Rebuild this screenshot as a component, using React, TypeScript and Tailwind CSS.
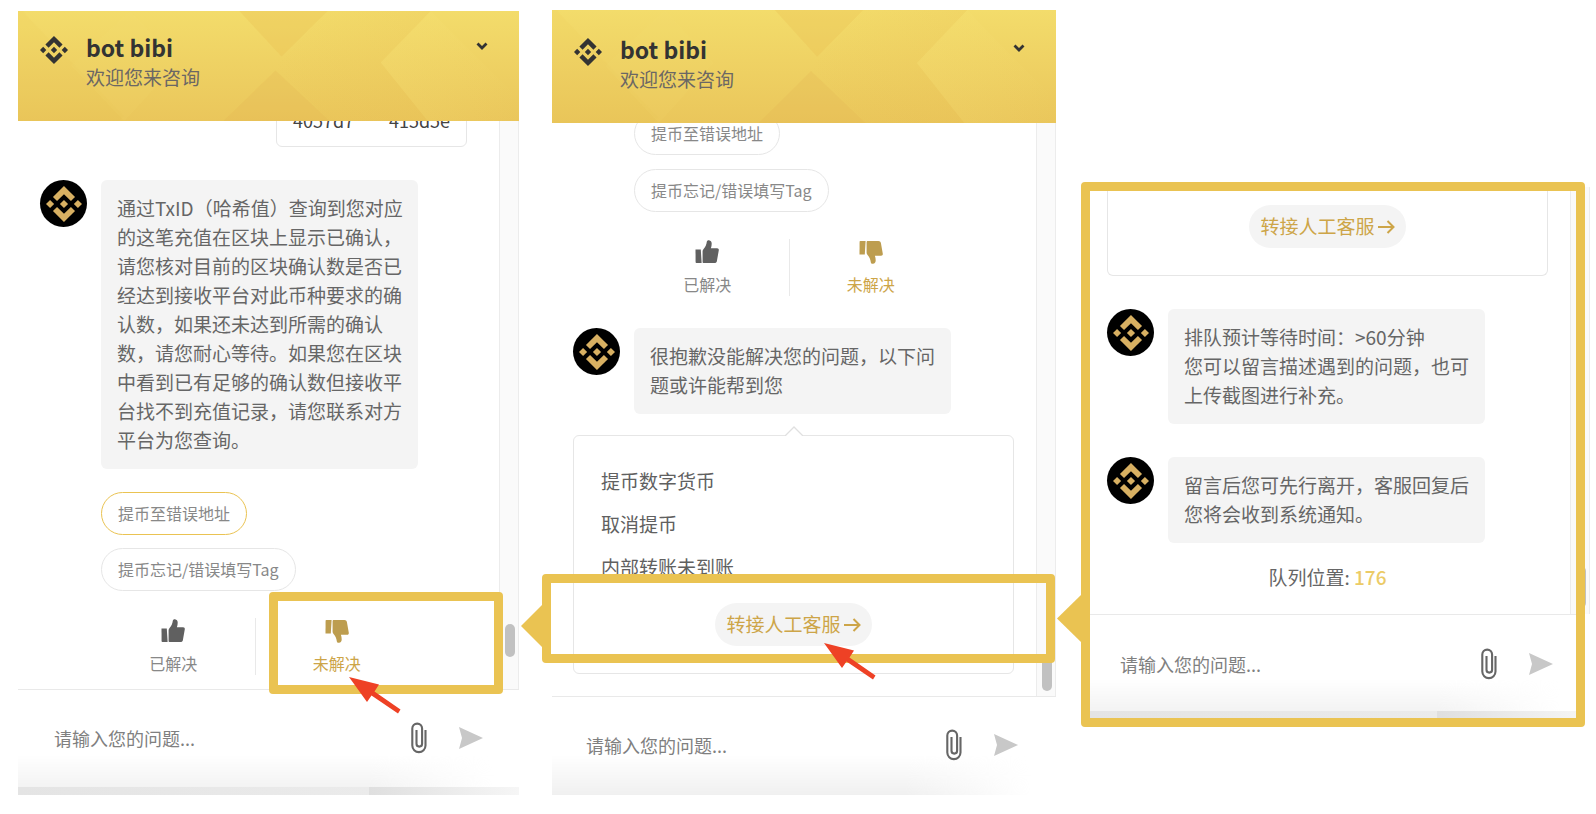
import { SiBinance } from "react-icons/si";

const HeaderPattern = () => (
  <svg
    className="absolute inset-0 h-full w-full"
    viewBox="0 0 500 111"
    preserveAspectRatio="none"
    aria-hidden="true"
  >
    <defs>
      <linearGradient id="headerBase" x1="0" y1="0" x2="0" y2="1">
        <stop offset="0" stopColor="#f3dc6b" />
        <stop offset="1" stopColor="#eac65b" />
      </linearGradient>
      <linearGradient id="headerShade" x1="0" y1="0" x2="1" y2="0">
        <stop offset="0" stopColor="#e6b94f" stopOpacity="0" />
        <stop offset="1" stopColor="#e6b94f" stopOpacity="0.18" />
      </linearGradient>
      <linearGradient id="headerGlow" x1="0" y1="0" x2="1" y2="0">
        <stop offset="0" stopColor="#f8e47a" stopOpacity="0.2" />
        <stop offset="1" stopColor="#f8e47a" stopOpacity="0" />
      </linearGradient>
    </defs>
    <rect width="500" height="111" fill="url(#headerBase)" />
    <path d="M10 6 106 106 101 111H0V0H5z" fill="#e6b94f" fillOpacity="0.08" />
    <path d="M112 0 160 52 106 111 53 55z" fill="#f8e47a" fillOpacity="0.1" />
    <path d="M221 0H309L263 46z" fill="#e6b94f" fillOpacity="0.26" />
    <path d="M309 0H412L362 52 409 111H311L257 56z" fill="url(#headerShade)" />
    <path d="M257 60 311 111H205z" fill="#e0b050" fillOpacity="0.2" />
    <path d="M362 52 412 0 433 22 500 89V111H409z" fill="url(#headerGlow)" />
  </svg>
);

const ThumbIcon = ({ className }: { className: string }) => (
  <svg className={className} viewBox="0 0 24 24" fill="currentColor" aria-hidden="true">
    <path d="M.5 9.500h5.300l.8 13.600H1.400A.9.9 0 0 1 .6 22.300z" />
    <path d="M7.600 22V11.200c0-.8.3-1.300.8-1.900 2-2.200 3.100-4.700 3.400-7.500C12 .6 12.900 0 14 .2c1.700.3 2.700 1.600 2.700 3.300 0 1.600-.3 3.200-.8 4.700h6.200c1.200 0 1.900.9 1.700 2.100l-1.900 10.600c-.2 1.300-1.100 2.200-2.500 2.200H8.900C8 23.100 7.600 22.700 7.600 22z" />
  </svg>
);

const Header = ({ className }: { className: string }) => (
  <header className={`relative flex items-start overflow-hidden pl-[22px] pr-[31px] ${className}`}>
    <HeaderPattern />
    <SiBinance className="relative mt-1 size-7 text-[#333333]" />
    <div className="relative ml-[18px] flex-1">
      <h1 className="text-[23px] leading-[31px] font-bold text-[#333333]">bot bibi</h1>
      <p className="text-[19px] leading-7 text-[#6b6764]">欢迎您来咨询</p>
    </div>
    <button type="button" aria-label="收起" className="relative mt-[10px] text-[#333333]">
      <svg className="h-2 w-3" viewBox="0 0 12 8" fill="none" aria-hidden="true">
        <path d="m1.500 1.500 4.500 4.500 4.500-4.500" stroke="currentColor" strokeWidth="2.800" />
      </svg>
    </button>
  </header>
);

const BotMessage = ({ children }: { children: React.ReactNode }) => (
  <div className="flex items-start gap-[14px]">
    <div className="flex size-[47px] shrink-0 items-center justify-center rounded-full bg-black">
      <SiBinance className="size-9 text-[#d8b062]" />
    </div>
    <p className="w-[317px] rounded-md bg-[#f4f4f4] pt-[13px] pr-3 pb-[15px] pl-4 text-[19px] leading-[29px] text-[#666666]">
      {children}
    </p>
  </div>
);

const Chip = ({ label, active = false }: { label: string; active?: boolean }) => (
  <button
    type="button"
    className={`h-[43px] rounded-full border bg-white px-4 pb-[2px] text-base text-[#888888] ${
      active ? "border-[#eac352]" : "border-[#e6e6e6]"
    }`}
  >
    {label}
  </button>
);

const Feedback = () => (
  <div className="flex w-[326px]">
    <button
      type="button"
      className="flex flex-1 flex-col items-center gap-2 border-r border-[#e9e9e9] pt-px text-base leading-6 text-[#888888]"
    >
      <ThumbIcon className="size-6 text-[#606060]" />
      已解决
    </button>
    <button
      type="button"
      className="flex flex-1 flex-col items-center gap-2 pt-px text-base leading-6 text-[#cda548]"
    >
      <ThumbIcon className="size-6 -scale-y-100 text-[#bd9d4f]" />
      未解决
    </button>
  </div>
);

const TransferButton = () => (
  <button
    type="button"
    className="mx-auto flex h-[43px] items-center gap-[2px] rounded-full bg-[#f4f4f4] px-[11px] text-[19px] text-[#cda548]"
  >
    转接人工客服
    <svg className="h-4 w-[18px]" viewBox="0 0 18 16" fill="none" aria-hidden="true">
      <path d="M1 8h15M10.500 2l6 6-6 6" stroke="currentColor" strokeWidth="2" />
    </svg>
  </button>
);

const Scrollbar = ({ thumb }: { thumb: string }) => (
  <div className="relative w-5 shrink-0 border-x border-[#ececec] bg-[#fafafa]">
    <div className={`absolute left-[5px] w-[10px] rounded-full bg-[#c1c1c1] ${thumb}`} />
  </div>
);

const Composer = ({ className }: { className: string }) => (
  <form className={`relative flex items-start border-t border-[#e9e9e9] bg-white ${className}`}>
    <div className="absolute inset-x-0 bottom-0 h-10 bg-linear-to-b from-transparent to-[#f0f0f0] mask-r-from-70% mask-r-to-95%" />
    <input
      type="text"
      aria-label="请输入您的问题"
      placeholder="请输入您的问题..."
      className="relative h-8 min-w-0 flex-1 text-lg text-[#666666] outline-none placeholder:text-[#808080]"
    />
    <button type="button" aria-label="上传附件" className="relative text-[#666666]">
      <svg className="h-8 w-4" viewBox="0 0 16 32" fill="none" aria-hidden="true">
        <path
          d="M14.500 8v15.500a6.600 6.600 0 0 1-13.200 0V6.500a4.900 4.900 0 0 1 9.800 0v15.300a2.800 2.800 0 0 1-5.600 0V8"
          stroke="currentColor"
          strokeWidth="2.100"
        />
      </svg>
    </button>
    <button type="button" aria-label="发送" className="relative ml-8 mt-[5px] text-[#c8c8c8]">
      <svg className="h-[22px] w-6" viewBox="0 0 24 22" fill="currentColor" aria-hidden="true">
        <path d="M0 0 24 11 0 22 3 11z" />
      </svg>
    </button>
  </form>
);

// grey strip left over from the page's horizontal scrollbar
const BottomStrip = () => (
  <div className="absolute inset-x-0 bottom-0 flex h-2">
    <div className="flex-[7] bg-linear-to-r from-[#e4e4e4] to-[#ebebeb]" />
    <div className="flex-[3] bg-linear-to-r from-[#dfdfdf] to-[#f6f6f6]" />
  </div>
);

const Pointer = ({ className }: { className: string }) => (
  <svg className={`absolute ${className}`} viewBox="0 0 26 50" preserveAspectRatio="none" aria-hidden="true">
    <path d="M0 25 26 0v50z" fill="#eac352" />
  </svg>
);

const RedArrow = ({ className }: { className: string }) => (
  <svg className={`absolute z-20 h-[37px] w-[52px] ${className}`} viewBox="0 0 52 37" aria-hidden="true">
    <path d="M0 0 30 7.500 25.500 14.500 51.500 32.500 49 36.500 22.500 18.500 18 25z" fill="#ee4125" />
  </svg>
);

const frame = "pointer-events-none absolute z-10 rounded border-[9px] border-[#eac352]";

export default function App() {
  return (
    <main
      lang="zh-CN"
      className="flex min-h-screen items-start bg-white pl-[18px] pr-[6px] font-['Noto_Sans_CJK_SC',sans-serif]"
    >
      <section className="relative mt-[11px] min-w-0 flex-[501]">
        <Header className="h-[110px] pt-[21px]" />
        <div className="relative">
          <div className="flex">
            <div className="flex min-w-0 flex-1 flex-col overflow-hidden pb-[14px] pl-[22px]">
              <div className="-mt-6 mr-8 flex h-[50px] w-[191px] items-center justify-between self-end rounded-md border border-[#e6e6e6] px-4 pb-1 text-lg text-[#444444]">
                <span>4057d7</span>
                <span>415d5e</span>
              </div>
              <div className="mt-[33px]">
                <BotMessage>
                  通过TxID（哈希值）查询到您对应的这笔充值在区块上显示已确认，请您核对目前的区块确认数是否已经达到接收平台对此币种要求的确认数，如果还未达到所需的确认数，请您耐心等待。如果您在区块中看到已有足够的确认数但接收平台找不到充值记录，请您联系对方平台为您查询。
                </BotMessage>
              </div>
              <div className="mt-[23px] ml-[61px] flex flex-col items-start gap-[13px]">
                <Chip label="提币至错误地址" active />
                <Chip label="提币忘记/错误填写Tag" />
              </div>
              <div className="mt-[27px] ml-[52px]">
                <Feedback />
              </div>
            </div>
            <Scrollbar thumb="bottom-8 h-[33px]" />
          </div>
          <div className={`${frame} right-4 -bottom-[5px] h-[102px] w-[234px]`} />
        </div>
        <Composer className="h-[106px] pt-8 pl-9 pr-9" />
        <BottomStrip />
        <RedArrow className="left-[331px] top-[666px]" />
      </section>

      <section className="relative mt-[10px] ml-[33px] min-w-0 flex-[504]">
        <Header className="h-[113px] pt-6" />
        <div className="relative">
          <div className="flex">
            <div className="flex min-w-0 flex-1 flex-col overflow-hidden pb-[22px] pl-[21px] pr-[22px]">
              <div className="-mt-[11px] ml-[61px] flex flex-col items-start gap-[14px]">
                <Chip label="提币至错误地址" />
                <Chip label="提币忘记/错误填写Tag" />
              </div>
              <div className="mt-[27px] ml-[53px]">
                <Feedback />
              </div>
              <div className="mt-8">
                <BotMessage>很抱歉没能解决您的问题，以下问题或许能帮到您</BotMessage>
              </div>
              <div className="relative mt-[21px] rounded-md border border-[#e6e6e6] pt-[23px] pb-[27px]">
                <svg
                  className="absolute left-1/2 -top-[10px] h-[10px] w-[18px] -translate-x-1/2"
                  viewBox="0 0 18 10"
                  aria-hidden="true"
                >
                  <path d="M0 10 9 1l9 9" fill="#ffffff" stroke="#e0e0e0" strokeWidth="1.300" />
                </svg>
                <ul className="pl-[27px] text-[19px] leading-[43px] text-[#606060]">
                  <li>提币数字货币</li>
                  <li>取消提币</li>
                  <li>内部转账未到账</li>
                </ul>
                <div className="mt-[15px]">
                  <TransferButton />
                </div>
              </div>
            </div>
            <Scrollbar thumb="bottom-[5px] h-9" />
          </div>
          <div className={`${frame} -left-[10px] right-[1px] bottom-[33px] h-[89px]`} />
          <Pointer className="-left-[31px] bottom-[48px] h-[44px] w-[22px]" />
        </div>
        <Composer className="h-[99px] pt-8 pl-[34px] pr-[38px]" />
        <RedArrow className="left-[272px] top-[633px]" />
      </section>

      <section className="relative mt-[182px] ml-[25px] min-w-0 flex-[509] pt-[5px] pb-2">
        <div className="ml-[9px]">
          <div className="flex">
            <div className="flex min-w-0 flex-1 flex-col overflow-hidden pb-[22px] pl-[17px] pr-[22px]">
              <div className="rounded-b-md border border-t-0 border-[#e6e6e6] pt-[18px] pb-[27px]">
                <TransferButton />
              </div>
              <div className="mt-[33px] flex flex-col gap-[33px]">
                <BotMessage>
                  排队预计等待时间：&gt;60分钟
                  <br />
                  您可以留言描述遇到的问题，也可上传截图进行补充。
                </BotMessage>
                <BotMessage>留言后您可先行离开，客服回复后您将会收到系统通知。</BotMessage>
              </div>
              <p className="mt-5 mb-px text-center text-[19px] leading-7 text-[#666666]">
                队列位置: <span className="font-medium text-[#eccb66]">176</span>
              </p>
            </div>
            <Scrollbar thumb="bottom-[6px] h-[42px]" />
          </div>
          <div className="relative mr-[5px]">
            <Composer className="h-[105px] pt-[33px] pl-[30px] pr-8" />
            <BottomStrip />
          </div>
        </div>
        <div className={`${frame} inset-y-0 left-0 right-[5px]`} />
        <Pointer className="-left-6 top-[412px] h-[49px] w-[25px]" />
      </section>
    </main>
  );
}
